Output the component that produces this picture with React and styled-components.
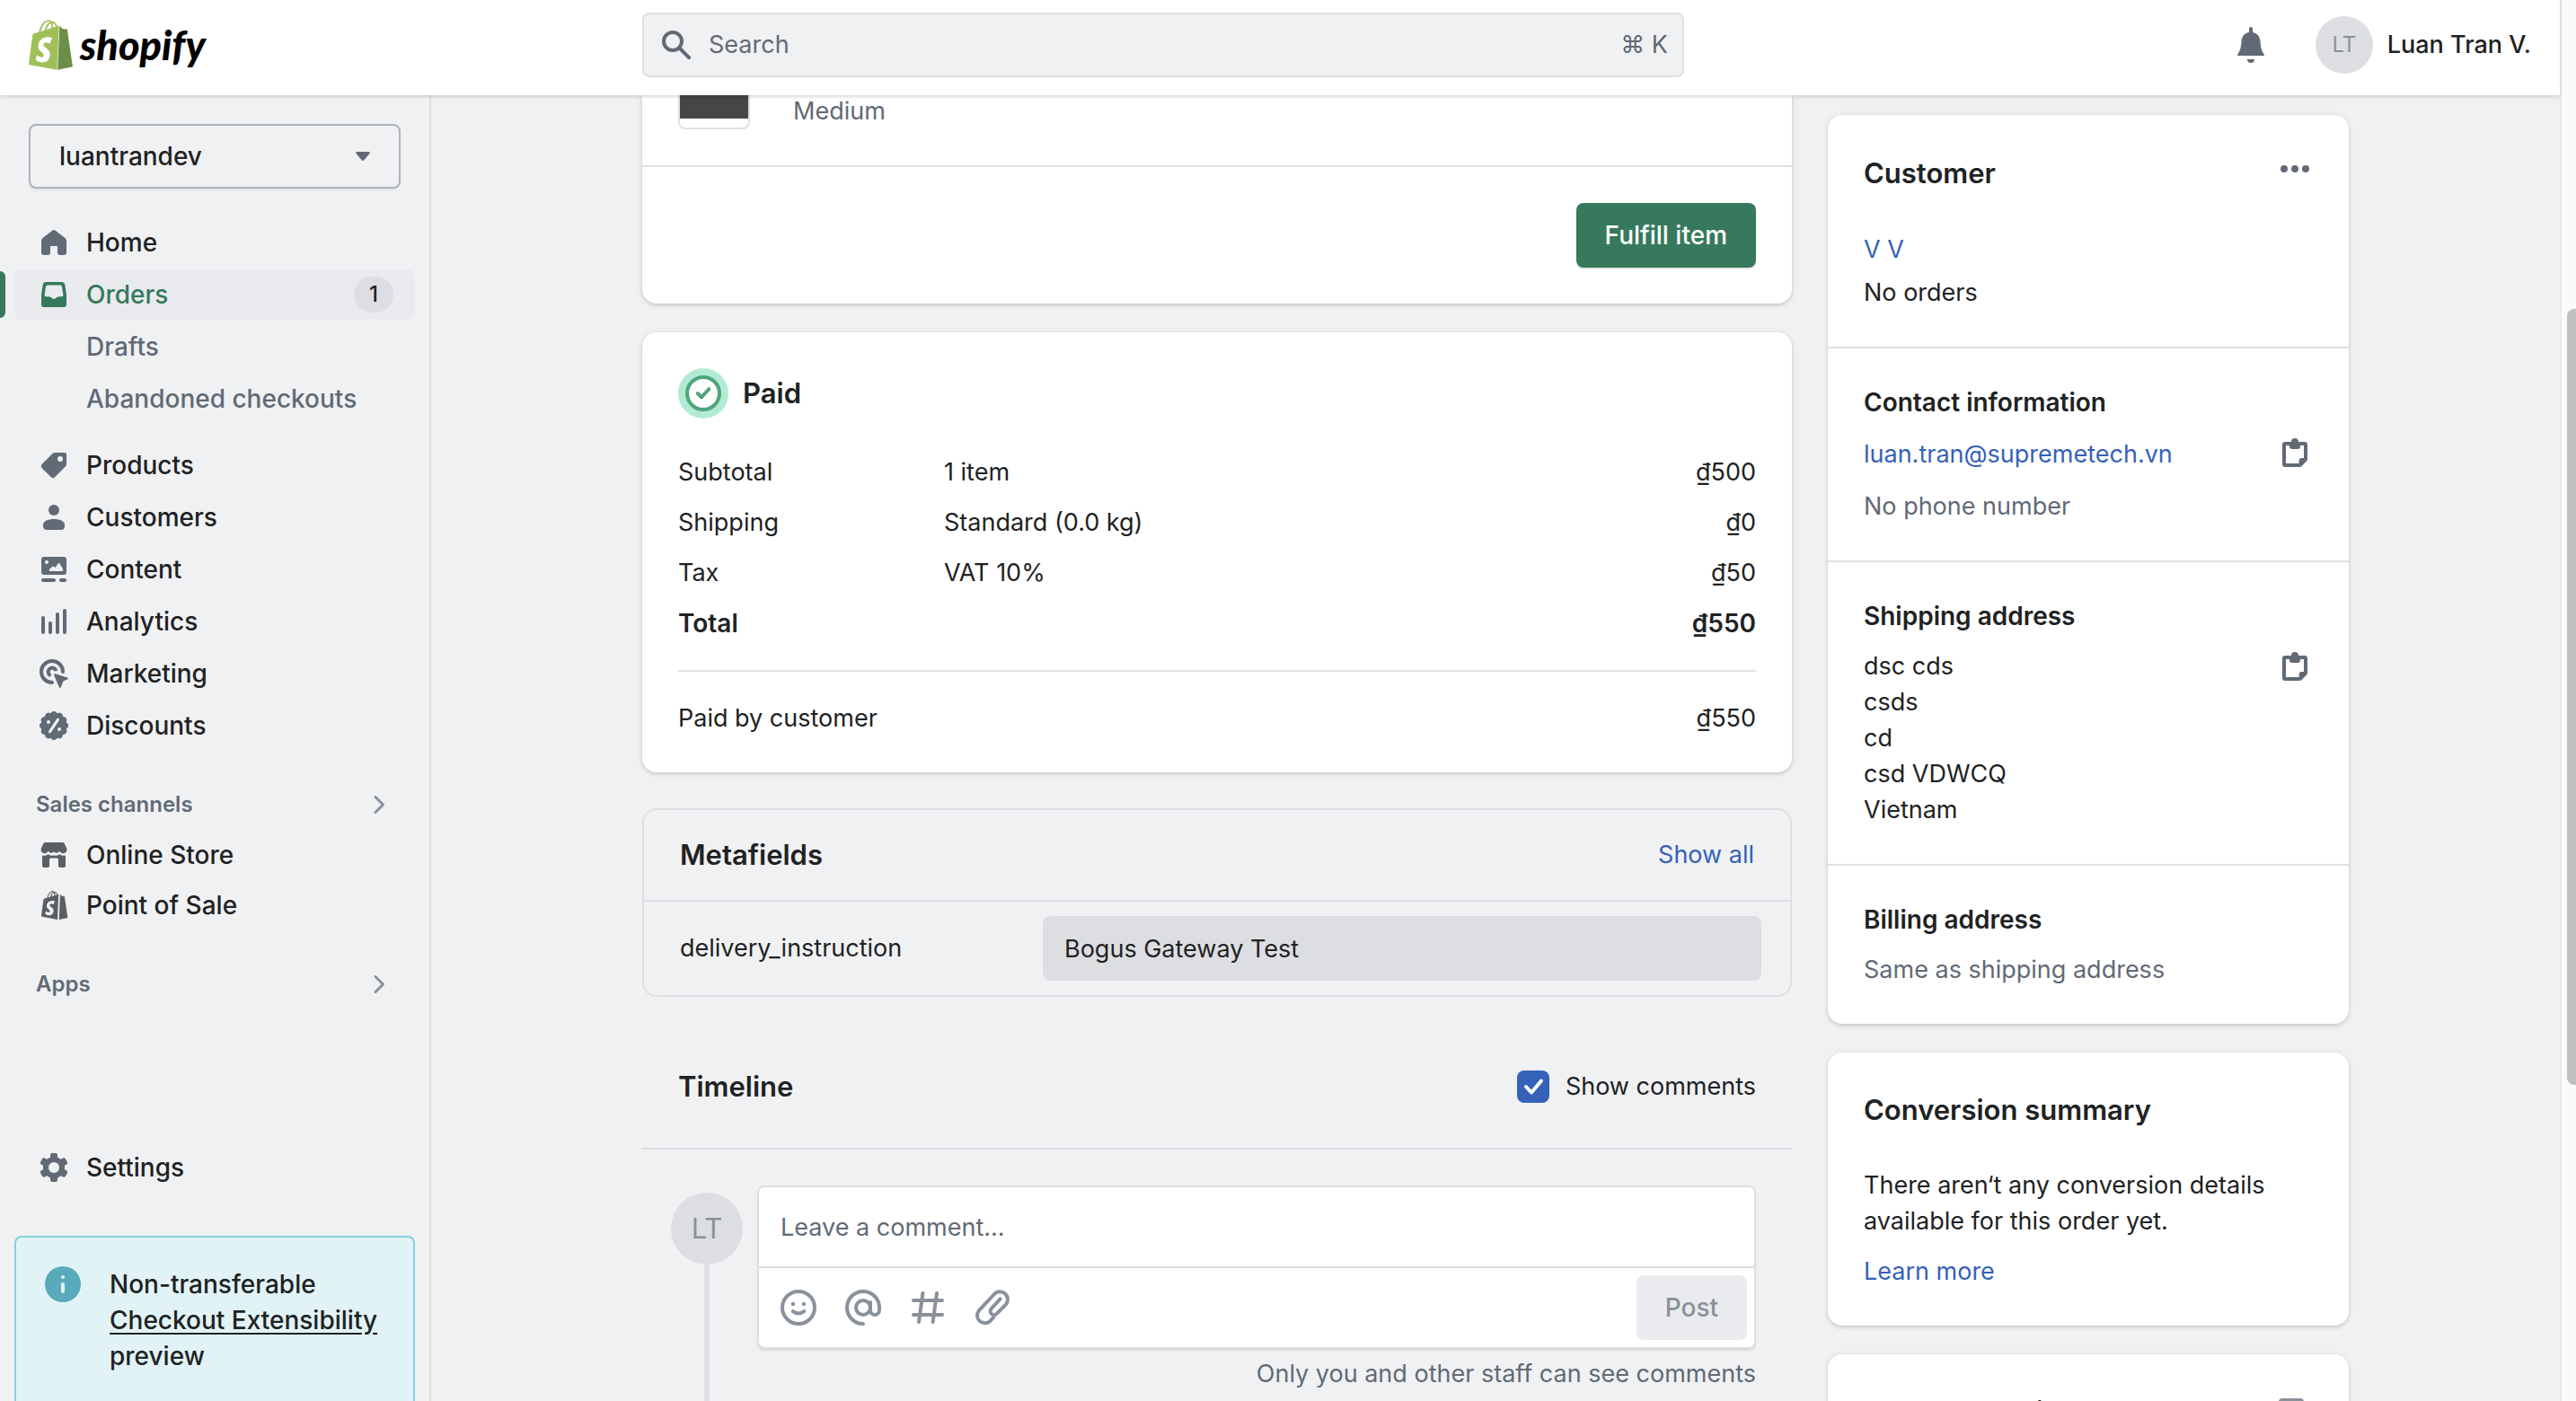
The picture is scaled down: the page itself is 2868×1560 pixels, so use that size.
import React from "react";
import styled, { createGlobalStyle, css } from "styled-components";

const c = {
  text: "#202223",
  subdued: "#616a75",
  icon: "#616a75",
  muted: "#8a919b",
  page: "#f0f1f3",
  border: "#dddfe2",
  divider: "#dfdfe5",
  fill: "#dddee2",
  hover: "#eaebee",
  green: "#36795d",
  link: "#3561b8",
};

const GlobalStyle = createGlobalStyle`
  *, *::before, *::after { box-sizing: border-box; }
  body {
    margin: 0;
    background: ${c.page};
    color: ${c.text};
    font: 400 27px/40px Inter, "Liberation Sans", sans-serif;
    -webkit-font-smoothing: antialiased;
  }
  button, input, select { font: inherit; color: inherit; }
  h2, h3, p, ul { margin: 0; padding: 0; }
  ul { list-style: none; }
`;

/* ---------- Frame ---------- */

const Frame = styled.div`
  display: grid;
  grid-template-columns: 480px minmax(0, 1fr) 18px;
  grid-template-rows: 106px minmax(0, 1fr);
  height: 100vh;
  overflow: hidden;
`;

const pageColumns = css`
  display: grid;
  grid-template-columns: minmax(32px, 1fr) minmax(0, 1900px) minmax(32px, 1fr);
`;

const strong = css`
  font-size: 28px;
  font-weight: 500;
`;

const TopBar = styled.header`
  grid-column: 1 / 3;
  display: grid;
  grid-template-columns: 480px minmax(0, 1fr);
  align-items: center;
  padding-bottom: 6px;
  background: #fff;
  box-shadow: 0 2px 4px rgba(0, 0, 0, 0.14);
  z-index: 1;
`;

const Brand = styled.a`
  display: flex;
  align-items: center;
  gap: 8px;
  height: 56px;
  padding-left: 32px;
  color: #000;
  font: italic 900 45px/56px Lato, "Open Sans", sans-serif;
  text-decoration: none;
`;

const TopBarBody = styled.div`
  ${pageColumns}
  align-items: center;
`;

const SearchBox = styled.label`
  grid-column: 2;
  grid-row: 1;
  display: flex;
  align-items: center;
  gap: 16px;
  width: 100%;
  max-width: 1160px;
  height: 72px;
  padding: 0 16px;
  border: 2px solid ${c.divider};
  border-radius: 8px;
  background: ${c.page};
  color: ${c.subdued};
`;

const BareInput = styled.input`
  flex: 1;
  min-width: 0;
  padding: 0;
  border: 0;
  outline: 0;
  background: none;
  &::placeholder { color: ${c.subdued}; opacity: 1; }
`;

const UserArea = styled.div`
  grid-column: 2 / 4;
  grid-row: 1;
  justify-self: end;
  display: flex;
  align-items: center;
  gap: 52px;
  padding-right: 32px;
`;

const IconButton = styled.button`
  display: inline-flex;
  flex: none;
  padding: 0;
  border: 0;
  background: none;
  color: ${(p) => (p.$muted ? c.muted : c.icon)};
`;

const UserButton = styled.button`
  display: flex;
  align-items: center;
  gap: 16px;
  padding: 0;
  border: 0;
  background: none;
  font-weight: 500;
`;

const Avatar = styled.span`
  display: flex;
  flex: none;
  align-items: center;
  justify-content: center;
  width: ${(p) => p.$size}px;
  height: ${(p) => p.$size}px;
  border-radius: 50%;
  background: ${c.fill};
  color: ${c.muted};
  font-size: ${(p) => (p.$size > 64 ? 31 : 24)}px;
  font-weight: 400;
`;

/* ---------- Sidebar ---------- */

const Sidebar = styled.nav`
  display: flex;
  flex-direction: column;
  min-height: 0;
  overflow: hidden;
  padding-top: 32px;
  border-right: 2px solid ${c.border};
`;

const StorePicker = styled.div`
  display: grid;
  align-items: center;
  margin: 0 32px 32px;
  > * { grid-area: 1 / 1; }
  > svg { justify-self: end; margin-right: 34px; pointer-events: none; }
`;

const StoreSelect = styled.select`
  ${strong}
  width: 100%;
  height: 72px;
  padding: 0 32px;
  border: 2px solid #aeb3bb;
  border-radius: 8px;
  background: none;
  box-shadow: 0 2px 2px rgba(0, 0, 0, 0.06);
  appearance: none;
`;

const NavList = styled.ul`
  display: grid;
  gap: ${(p) => (p.$tight ? 0 : 2)}px;
  padding: 0 16px;
  & + & { margin-top: 18px; }
`;

const NavItem = styled.li`
  display: flex;
  border-radius: 8px;
  background: ${(p) => (p.$active ? c.hover : "none")};
  ${(p) =>
    p.$active &&
    css`
      position: relative;
      &::before {
        content: "";
        position: absolute;
        left: -16px;
        top: 2px;
        bottom: 2px;
        width: 6px;
        border-radius: 0 8px 8px 0;
        background: ${c.green};
      }
    `}
`;

const NavLink = styled.a`
  ${strong}
  display: flex;
  flex: 1;
  align-items: center;
  gap: 16px;
  height: 56px;
  padding: 0 24px 0 ${(p) => (p.$sub ? 80 : 24)}px;
  color: ${(p) => (p.$active ? c.green : p.$sub ? c.subdued : c.text)};
  text-decoration: none;
  > svg { color: ${(p) => (p.$active ? c.green : p.$dark ? "#5c5f62" : c.icon)}; }
`;

const Count = styled.span`
  margin-left: auto;
  min-width: 44px;
  border-radius: 20px;
  background: ${c.fill};
  color: ${c.text};
  font-size: 24px;
  text-align: center;
`;

const NavHeading = styled.button`
  display: flex;
  align-items: center;
  justify-content: space-between;
  height: 56px;
  margin-top: 32px;
  padding: 0 46px 0 40px;
  border: 0;
  background: none;
  color: ${c.subdued};
  font-size: 24px;
  font-weight: 600;
  > svg { color: ${c.muted}; }
`;

const SidebarFooter = styled.div`
  display: grid;
  gap: 48px;
  margin-top: auto;
`;

const Notice = styled.aside`
  ${strong}
  display: flex;
  gap: 32px;
  margin: 0 16px;
  padding: 32px 20px 30px 32px;
  border: 2px solid #85cfda;
  border-bottom: 0;
  border-radius: 8px 8px 0 0;
  background: #e1f3f6;
  a { color: inherit; text-underline-offset: 4px; }
`;

/* ---------- Page ---------- */

const Page = styled.main`
  ${pageColumns}
  min-height: 0;
  overflow: hidden;
`;

const Columns = styled.div`
  grid-column: 2;
  display: grid;
  grid-template-columns: minmax(0, 1fr) 580px;
  gap: 40px;
  align-items: start;
`;

const Stack = styled.div`
  display: grid;
  gap: 32px;
  padding-top: ${(p) => p.$top || 0}px;
`;

const Card = styled.section`
  border-radius: ${(p) => (p.$continued ? "0 0 16px 16px" : "16px")};
  background: #fff;
  box-shadow: 0 0 10px rgba(23, 24, 24, 0.05), 0 2px 4px rgba(0, 0, 0, 0.15);
`;

const Section = styled.div`
  display: grid;
  gap: 16px;
  padding: 40px;
  & + & { border-top: 2px solid ${c.divider}; }
`;

const LineItem = styled.div`
  display: flex;
  align-items: flex-end;
  gap: 48px;
  height: 78px;
  padding: 0 40px 40px;
  color: ${c.subdued};
`;

const Thumbnail = styled.div`
  width: 80px;
  height: 80px;
  padding-bottom: 10px;
  border: 2px solid ${c.divider};
  border-radius: 8px;
  background: #474545 content-box;
`;

const ButtonRow = styled.div`
  display: flex;
  justify-content: flex-end;
  padding: 40px;
  border-top: 2px solid ${c.divider};
`;

const Button = styled.button`
  ${strong}
  height: 72px;
  padding: 0 32px;
  border: 0;
  border-radius: 8px;
  background: ${c.green};
  color: #fff;
  box-shadow: 0 2px 2px rgba(0, 0, 0, 0.1);
  &:disabled { background: ${c.hover}; color: ${c.muted}; box-shadow: none; }
`;

const PaymentCard = styled(Card)`
  padding: 40px 40px 32px;
`;

const Title = styled.h2`
  font-size: 31px;
  line-height: 48px;
  font-weight: 600;
`;

const Subtitle = styled.h3`
  font-size: 28px;
  line-height: 40px;
  font-weight: 600;
`;

const StatusTitle = styled.div`
  display: flex;
  align-items: center;
  gap: 16px;
  margin-bottom: 32px;
`;

const Totals = styled.table`
  width: 100%;
  border-collapse: collapse;
  table-layout: fixed;
  th, td { padding: 8px 0; font-weight: inherit; text-align: left; }
  th { width: 296px; }
  td:last-child { text-align: right; }
  tbody tr:last-child { font-size: 28px; font-weight: 600; }
  tbody tr:last-child > * { padding-bottom: 32px; }
  tfoot tr > * { padding-top: 32px; border-top: 2px solid ${c.divider}; }
`;

const Metafields = styled.section`
  margin-top: 8px;
  border: 2px solid ${c.border};
  border-radius: 16px;
`;

const MetafieldsHeader = styled.div`
  display: flex;
  align-items: center;
  justify-content: space-between;
  height: 100px;
  padding: 0 40px;
`;

const MetafieldRow = styled.div`
  display: grid;
  grid-template-columns: minmax(0, 1fr) minmax(0, 800px);
  align-items: center;
  padding: 16px 32px 16px 40px;
  border-top: 2px solid ${c.border};
`;

const MetafieldInput = styled.input`
  width: 100%;
  height: 72px;
  padding: 0 24px;
  border: 0;
  border-radius: 8px;
  background: ${c.fill};
`;

const Link = styled.a`
  justify-self: start;
  color: ${c.link};
  text-decoration: none;
`;

const TimelineHeader = styled.div`
  display: flex;
  align-items: center;
  justify-content: space-between;
  padding: 44px 40px;
  border-bottom: 2px solid ${c.border};
`;

const CheckLabel = styled.label`
  display: flex;
  align-items: center;
  gap: 18px;
`;

const CheckSlot = styled.span`
  display: grid;
  > * { grid-area: 1 / 1; }
  > svg { pointer-events: none; }
`;

const Checkbox = styled.input`
  width: 36px;
  height: 36px;
  margin: 0;
  border-radius: 8px;
  background: ${c.fill};
  appearance: none;
  &:checked { background: ${c.link}; }
`;

const Timeline = styled.div`
  display: grid;
  grid-template-columns: 80px minmax(0, 1fr);
  gap: 16px;
  margin-top: 8px;
  padding: 0 40px 0 32px;
`;

const Rail = styled.div`
  display: flex;
  flex-direction: column;
  align-items: center;
  padding-top: 8px;
  &::after { content: ""; flex: 1; width: 6px; min-height: 400px; background: ${c.border}; }
`;

const Composer = styled.div`
  display: grid;
  border: 2px solid ${c.border};
  border-radius: 8px;
  background: #fff;
  box-shadow: 0 2px 2px rgba(0, 0, 0, 0.1);
`;

const CommentInput = styled(BareInput)`
  height: 88px;
  padding: 0 24px;
`;

const ComposerTools = styled.div`
  display: flex;
  align-items: center;
  gap: 32px;
  padding: 8px 8px 8px 24px;
  border-top: 2px solid ${c.border};
  ${Button} { margin-left: auto; }
`;

const Hint = styled.p`
  margin-top: 8px;
  color: ${c.subdued};
  text-align: right;
`;

const SplitRow = styled.div`
  display: flex;
  align-items: flex-start;
  justify-content: space-between;
  min-height: ${(p) => p.$min || 0}px;
  > :first-child { align-self: center; }
`;

const CardHeader = styled(SplitRow)`
  margin-bottom: 24px;
`;

const Lines = styled.div`
  display: grid;
  gap: ${(p) => p.$gap || 0}px;
`;

const Subdued = styled.p`
  color: ${c.subdued};
`;

/* ---------- Scroll track ---------- */

const Track = styled.div`
  grid-column: 3;
  grid-row: 1 / 3;
  overflow: hidden;
  padding: 344px 0 0 6px;
  border-left: 2px solid #e8e8e8;
  background: #fafafa;
`;

const Thumb = styled.div`
  width: 100%;
  height: 864px;
  border-radius: 8px 0 0 8px;
  background: #c1c1c1;
`;

/* ---------- Icons ---------- */

const Glyph = styled.svg.attrs({
  width: 40,
  height: 40,
  fill: "currentColor",
  "aria-hidden": true,
})`
  flex: none;
`;

const Icon = ({ children, viewBox = "0 0 20 20" }) => <Glyph viewBox={viewBox}>{children}</Glyph>;

const Line = (props) => (
  <g fill="none" stroke="currentColor" strokeWidth="2" strokeLinecap="round" strokeLinejoin="round" {...props} />
);

const BAG_SIDE =
  "M15.337 23.979l7.216-1.561s-2.604-17.613-2.625-17.73c-.018-.116-.114-.192-.211-.192s-1.929-.136-1.929-.136-1.275-1.274-1.439-1.411c-.045-.037-.075-.057-.121-.074l-.914 21.104z";
const BAG_FRONT =
  "M11.71 11.305s-.81-.424-1.774-.424c-1.447 0-1.504.906-1.504 1.141 0 1.232 3.24 1.715 3.24 4.629 0 2.295-1.44 3.76-3.406 3.76-2.354 0-3.54-1.465-3.54-1.465l.646-2.086s1.245 1.066 2.28 1.066c.675 0 .975-.545.975-.932 0-1.619-2.654-1.694-2.654-4.359-.034-2.237 1.571-4.416 4.827-4.416 1.257 0 1.875.361 1.875.361l-.945 2.715zM11.17.83c.136 0 .271.038.405.135-.984.465-2.064 1.639-2.508 3.992-.656.213-1.293.405-1.889.578C7.697 3.75 8.951.84 11.17.84V.83zm1.235 2.949v.135c-.754.232-1.583.484-2.394.736.466-1.777 1.333-2.645 2.085-2.971.193.501.309 1.176.309 2.1zm.539-2.234c.694.074 1.141.867 1.429 1.755-.349.114-.735.231-1.158.366v-.252c0-.752-.096-1.371-.271-1.871zm2.992 1.289c-.02 0-.06.021-.078.021s-.289.075-.714.21c-.423-1.233-1.176-2.37-2.508-2.37h-.115C12.135.209 11.669 0 11.265 0 8.159 0 6.675 3.877 6.21 5.846c-1.194.365-2.063.636-2.16.674-.675.213-.694.232-.772.87-.075.462-1.83 14.063-1.83 14.063L15.009 24l.927-21.166z";

const BagLogo = () => (
  <svg width="49" height="56" viewBox="1.448 0 21.105 24" aria-hidden="true">
    <path d={BAG_FRONT} fill="#9fbf58" fillRule="evenodd" />
    <path d={BAG_SIDE} fill="#6b8e49" />
  </svg>
);

const HomeIcon = () => (
  <Icon>
    <path d="M9.300 3.300a1.100 1.100 0 0 1 1.400 0l5.500 4.200q.8.700.8 1.700v6.300a1.500 1.500 0 0 1-1.500 1.500h-2.300a1.200 1.200 0 0 1-1.200-1.200v-3.800H8v3.800A1.200 1.200 0 0 1 6.800 17H4.500A1.500 1.500 0 0 1 3 15.500V9.200q0-1 .8-1.700z" />
  </Icon>
);

const OrdersIcon = () => (
  <Icon>
    <path
      fillRule="evenodd"
      d="M5.800 3h8.400a2 2 0 0 1 2 1.700L17 10v5.500a1.500 1.500 0 0 1-1.500 1.500h-11A1.500 1.500 0 0 1 3 15.500V10l.8-5.300a2 2 0 0 1 2-1.700zM6.500 4.800a1 1 0 0 0-1 .8L4.800 10.200q-.1.900.7.900h1.600q.6 0 1 .3l1.200.8q.7.400 1.400 0l1.200-.8q.4-.3 1-.3h1.600q.8 0 .7-.9l-.7-4.600a1 1 0 0 0-1-.8z"
    />
  </Icon>
);

const ProductsIcon = () => (
  <Icon>
    <path
      fillRule="evenodd"
      d="M10.600 3H16a1 1 0 0 1 1 1v5.400a2 2 0 0 1-.6 1.400l-5.700 5.700a1.700 1.700 0 0 1-2.400 0L3.500 11.700a1.700 1.700 0 0 1 0-2.400l5.700-5.700a2 2 0 0 1 1.400-.6zM13.500 8a1.500 1.500 0 1 0 0-3 1.500 1.500 0 0 0 0 3z"
    />
  </Icon>
);

const CustomersIcon = () => (
  <Icon>
    <circle cx="10" cy="6" r="3" />
    <path d="M4 14.200C4 12 7 11 10 11s6 1 6 3.200V15a2 2 0 0 1-2 2H6a2 2 0 0 1-2-2z" />
  </Icon>
);

const ContentIcon = () => (
  <Icon>
    <path
      fillRule="evenodd"
      d="M4.500 3h11A1.500 1.500 0 0 1 17 4.500v7a1.500 1.500 0 0 1-1.500 1.500h-11A1.500 1.500 0 0 1 3 11.500v-7A1.500 1.500 0 0 1 4.500 3zM6 7a1 1 0 1 0 0-2 1 1 0 0 0 0 2zm2 4h6.500a.7.7 0 0 0 .6-1l-1.800-3.100q-.5-.8-1.100 0L11 8.700q-.3.400-.7 0l-.2-.2q-.5-.5-1 0L7.400 10q-.4.800.6 1z"
    />
    <path d="M4 15h6a1 1 0 0 1 0 2H4a1 1 0 0 1 0-2zM14 15h2a1 1 0 0 1 0 2h-2a1 1 0 0 1 0-2z" />
  </Icon>
);

const AnalyticsIcon = () => (
  <Icon>
    {[[3, 7], [7, 10], [11, 5], [15, 3]].map(([x, y]) => (
      <rect key={x} x={x} y={y} width="2" height={17 - y} rx="1" />
    ))}
  </Icon>
);

const MarketingIcon = () => (
  <Icon>
    <Line strokeLinecap="butt">
      <path d="M15 9a6 6 0 1 0-6 6" strokeLinecap="round" />
      <path d="M11.200 8.600A2.200 2.200 0 1 0 8.300 11.100" />
    </Line>
    <path d="M10.900 10.100 17.500 12.300q.9.500 0 1L15.200 14.300l-1.300 3.200q-.5.900-1 0L10.100 11q-.2-1 .8-.9z" />
  </Icon>
);

const DiscountsIcon = () => (
  <Icon>
    <circle cx="10" cy="10" r="7.200" />
    {[0, 30, 60, 90, 120, 150, 180, 210, 240, 270, 300, 330].map((a) => (
      <circle key={a} cx="10" cy="3.600" r="1.600" transform={`rotate(${a} 10 10)`} />
    ))}
    <g fill={c.page} stroke={c.page}>
      <path d="M12.200 6.700 7.800 13.300" strokeWidth="1.600" strokeLinecap="round" />
      <circle cx="7" cy="8" r="1" stroke="none" />
      <circle cx="13" cy="12" r="1" stroke="none" />
    </g>
  </Icon>
);

const StoreIcon = () => (
  <Icon>
    <path d="M5.300 3h9.400q.8 0 1.200.7l1.300 2.800v.5a2.100 2.100 0 0 1-4 .9 2.100 2.100 0 0 1-3.200.4 2.100 2.100 0 0 1-3.200-.4A2.100 2.100 0 0 1 2.800 7v-.5l1.300-2.800q.4-.7 1.200-.7z" />
    <path d="M3.500 10.300q1.800.4 3.300-.7 1.500 1 3.200.7 1.700.3 3.200-.7 1.500 1.100 3.300.7v5.700a1 1 0 0 1-1 1h-2a1 1 0 0 1-1-1v-3.500q0-.8-.8-.8H8.300q-.8 0-.8.800V16a1 1 0 0 1-1 1h-2a1 1 0 0 1-1-1z" />
  </Icon>
);

const PosIcon = () => (
  <Icon viewBox="-3 -3 30 30">
    <path d={BAG_FRONT} fillRule="evenodd" />
    <path d={BAG_SIDE} transform="translate(1 0)" />
  </Icon>
);

const SettingsIcon = () => (
  <Icon>
    <circle cx="10" cy="10" r="6" />
    {[0, 60, 120].map((a) => (
      <rect key={a} x="8" y="2" width="4" height="16" rx="1" transform={`rotate(${a} 10 10)`} />
    ))}
    <circle cx="10" cy="10" r="3" fill={c.page} />
  </Icon>
);

const ChevronIcon = () => (
  <svg width="20" height="24" viewBox="0 0 20 24" fill="none" stroke="currentColor" strokeWidth="3" strokeLinecap="round" strokeLinejoin="round" aria-hidden="true">
    <path d="M6 3.500 14.500 12 6 20.500" />
  </svg>
);

const CaretIcon = () => (
  <svg width="16" height="10" viewBox="0 0 16 10" fill={c.icon} aria-hidden="true">
    <path d="M1.500 0h13q2 .3 1 2L9.300 9.300q-1.300 1.300-2.600 0L.5 2q-1-1.700 1-2z" />
  </svg>
);

const InfoIcon = () => (
  <Icon>
    <circle cx="10" cy="10" r="10" fill="#59aabb" />
    <g fill="#e1f3f6">
      <circle cx="10" cy="6" r="1" />
      <rect x="9" y="9" width="2" height="6" rx="1" />
    </g>
  </Icon>
);

const SearchIcon = () => (
  <Icon>
    <Line>
      <circle cx="8" cy="8" r="5" />
      <path d="m12 12 5 5" />
    </Line>
  </Icon>
);

const BellIcon = () => (
  <Icon>
    <path d="M9 1a1 1 0 0 1 2 0v2c2.700.5 4 2.400 4.200 4.800.3 3.300.6 5.300 2 7.200.5.700.3 1-.4 1H3.200c-.7 0-.9-.3-.4-1 1.400-1.900 1.700-3.900 2-7.200C5 5.400 6.300 3.500 9 3z" />
    <path d="M8 18h4a2 2 0 0 1-4 0z" />
  </Icon>
);

const DotsIcon = () => (
  <Icon>
    <circle cx="4" cy="10" r="2" />
    <circle cx="10" cy="10" r="2" />
    <circle cx="16" cy="10" r="2" />
  </Icon>
);

const ClipboardIcon = () => (
  <Icon>
    <path
      fillRule="evenodd"
      d="M8 4a2 2 0 0 1 4 0h3.500A1.500 1.500 0 0 1 17 5.500V13.500q0 .8-.6 1.400l-2.500 2.500q-.6.600-1.400.6h-8A1.500 1.500 0 0 1 3 16.500v-11A1.500 1.500 0 0 1 4.500 4zM5 6v10h7.300v-1.500q0-1.500 1.500-1.500H15V6h-2v.8Q13 8 11.800 8H8.200Q7 8 7 6.800V6z"
    />
  </Icon>
);

const SuccessIcon = () => (
  <svg width="56" height="56" viewBox="0 0 28 28" fill="none" aria-hidden="true">
    <circle cx="14" cy="14" r="14" fill="#b2ebd3" />
    <circle cx="14" cy="14" r="9" fill="#fff" stroke="#50a57c" strokeWidth="2" />
    <path d="m10.900 14 2.100 2.200 4.200-4.600" stroke="#50a57c" strokeWidth="2" strokeLinecap="round" strokeLinejoin="round" />
  </svg>
);

const CheckMark = () => (
  <svg width="36" height="36" viewBox="0 0 36 36" fill="none" aria-hidden="true">
    <path d="m10 18 6 6.500 11-13" stroke="#fff" strokeWidth="4" strokeLinecap="round" strokeLinejoin="round" />
  </svg>
);

const SmileIcon = () => (
  <Icon>
    <Line>
      <circle cx="10" cy="10" r="9" />
      <path d="M6.900 12.100q3.100 2.300 6.200 0" />
    </Line>
    <circle cx="7" cy="8" r="1.100" />
    <circle cx="13" cy="8" r="1.100" />
  </Icon>
);

const MentionIcon = () => (
  <Icon>
    <Line>
      <circle cx="10" cy="10" r="4" />
      <path d="M14 7v4.500a2.500 2.500 0 0 0 5 0V10a9 9 0 1 0-9 9" />
    </Line>
  </Icon>
);

const HashIcon = () => (
  <Icon>
    <Line>
      <path d="M2 6h16M2 14h16M7.200 2 5 18M15 2l-2.200 16" />
    </Line>
  </Icon>
);

const AttachIcon = () => (
  <Icon>
    <Line>
      <path d="m10.700 15.300-2.100 2.300A4.300 4.300 0 0 1 2.400 11.700L11 2.500a4.300 4.300 0 0 1 6.300 5.900l-5 5a2 2 0 0 1-2.900-2.900l4.900-5.300" />
    </Line>
  </Icon>
);

const ReportIcon = () => (
  <Icon>
    <path fillRule="evenodd" d="M3 4.500h10A2 2 0 0 1 15 6.500v10a2 2 0 0 1-2 2H3a2 2 0 0 1-2-2v-10a2 2 0 0 1 2-2zM3 8v8h10V8z" />
  </Icon>
);

/* ---------- Content ---------- */

const mainNav = [
  { label: "Home", icon: HomeIcon },
  { label: "Orders", icon: OrdersIcon, active: true, count: 1 },
  { label: "Drafts", sub: true },
  { label: "Abandoned checkouts", sub: true },
];

const shopNav = [
  { label: "Products", icon: ProductsIcon },
  { label: "Customers", icon: CustomersIcon },
  { label: "Content", icon: ContentIcon },
  { label: "Analytics", icon: AnalyticsIcon },
  { label: "Marketing", icon: MarketingIcon },
  { label: "Discounts", icon: DiscountsIcon },
];

const channelNav = [
  { label: "Online Store", icon: StoreIcon, dark: true },
  { label: "Point of Sale", icon: PosIcon, dark: true },
];

const totals = [
  ["Subtotal", "1 item", "₫500"],
  ["Shipping", "Standard (0.0 kg)", "₫0"],
  ["Tax", "VAT 10%", "₫50"],
  ["Total", "", "₫550"],
];

const address = ["dsc cds", "csds", "cd", "csd VDWCQ", "Vietnam"];

const Nav = ({ items, tight }) => (
  <NavList $tight={tight}>
    {items.map(({ label, icon: ItemIcon, active, sub, dark, count }) => (
      <NavItem key={label} $active={active}>
        <NavLink href="#" $active={active} $sub={sub} $dark={dark}>
          {ItemIcon && <ItemIcon />}
          {label}
          {count && <Count>{count}</Count>}
        </NavLink>
      </NavItem>
    ))}
  </NavList>
);

export default function App() {
  return (
    <>
      <GlobalStyle />
      <Frame>
        <TopBar>
          <Brand href="#">
            <BagLogo />
            shopify
          </Brand>
          <TopBarBody>
            <SearchBox>
              <SearchIcon />
              <BareInput type="search" placeholder="Search" aria-label="Search" />
              <span>⌘ K</span>
            </SearchBox>
            <UserArea>
              <IconButton aria-label="Notifications"><BellIcon /></IconButton>
              <UserButton>
                <Avatar $size={64}>LT</Avatar>
                Luan Tran V.
              </UserButton>
            </UserArea>
          </TopBarBody>
        </TopBar>

        <Sidebar>
          <StorePicker>
            <StoreSelect aria-label="Store" defaultValue="luantrandev">
              <option>luantrandev</option>
            </StoreSelect>
            <CaretIcon />
          </StorePicker>
          <Nav items={mainNav} />
          <Nav items={shopNav} />
          <NavHeading>Sales channels<ChevronIcon /></NavHeading>
          <Nav items={channelNav} tight />
          <NavHeading>Apps<ChevronIcon /></NavHeading>
          <SidebarFooter>
            <Nav items={[{ label: "Settings", icon: SettingsIcon }]} />
            <Notice>
              <InfoIcon />
              <p>
                Non-transferable <a href="#">Checkout Extensibility</a> preview
              </p>
            </Notice>
          </SidebarFooter>
        </Sidebar>

        <Page>
          <Columns>
            <Stack>
              <Card $continued>
                <LineItem>
                  <Thumbnail />
                  Medium
                </LineItem>
                <ButtonRow><Button>Fulfill item</Button></ButtonRow>
              </Card>

              <PaymentCard>
                <StatusTitle>
                  <SuccessIcon />
                  <Title>Paid</Title>
                </StatusTitle>
                <Totals>
                  <tbody>
                    {totals.map(([name, detail, amount]) => (
                      <tr key={name}>
                        <th scope="row">{name}</th>
                        <td>{detail}</td>
                        <td>{amount}</td>
                      </tr>
                    ))}
                  </tbody>
                  <tfoot>
                    <tr>
                      <th scope="row">Paid by customer</th>
                      <td />
                      <td>₫550</td>
                    </tr>
                  </tfoot>
                </Totals>
              </PaymentCard>

              <Metafields>
                <MetafieldsHeader>
                  <Title>Metafields</Title>
                  <Link href="#">Show all</Link>
                </MetafieldsHeader>
                <MetafieldRow>
                  <label htmlFor="delivery">delivery_instruction</label>
                  <MetafieldInput id="delivery" readOnly value="Bogus Gateway Test" />
                </MetafieldRow>
              </Metafields>

              <TimelineHeader>
                <Title>Timeline</Title>
                <CheckLabel>
                  <CheckSlot>
                    <Checkbox type="checkbox" defaultChecked />
                    <CheckMark />
                  </CheckSlot>
                  Show comments
                </CheckLabel>
              </TimelineHeader>

              <Timeline>
                <Rail><Avatar $size={80}>LT</Avatar></Rail>
                <div>
                  <Composer>
                    <CommentInput placeholder="Leave a comment..." aria-label="Leave a comment" />
                    <ComposerTools>
                      <IconButton $muted aria-label="Emoji"><SmileIcon /></IconButton>
                      <IconButton $muted aria-label="Mention"><MentionIcon /></IconButton>
                      <IconButton $muted aria-label="Reference"><HashIcon /></IconButton>
                      <IconButton $muted aria-label="Attach file"><AttachIcon /></IconButton>
                      <Button disabled>Post</Button>
                    </ComposerTools>
                  </Composer>
                  <Hint>Only you and other staff can see comments</Hint>
                </div>
              </Timeline>
            </Stack>

            <Stack $top={22}>
              <Card>
                <Section>
                  <CardHeader $min={50}>
                    <Title>Customer</Title>
                    <IconButton aria-label="More actions"><DotsIcon /></IconButton>
                  </CardHeader>
                  <Lines $gap={8}>
                    <Link href="#">V V</Link>
                    <p>No orders</p>
                  </Lines>
                </Section>
                <Section>
                  <Subtitle>Contact information</Subtitle>
                  <SplitRow $min={44}>
                    <Link href="#">luan.tran@supremetech.vn</Link>
                    <IconButton aria-label="Copy email"><ClipboardIcon /></IconButton>
                  </SplitRow>
                  <Subdued>No phone number</Subdued>
                </Section>
                <Section>
                  <Subtitle>Shipping address</Subtitle>
                  <SplitRow>
                    <Lines>
                      {address.map((line) => <span key={line}>{line}</span>)}
                    </Lines>
                    <IconButton aria-label="Copy address"><ClipboardIcon /></IconButton>
                  </SplitRow>
                </Section>
                <Section>
                  <Subtitle>Billing address</Subtitle>
                  <Subdued>Same as shipping address</Subdued>
                </Section>
              </Card>

              <Card>
                <Section>
                  <CardHeader><Title>Conversion summary</Title></CardHeader>
                  <p>There aren‘t any conversion details available for this order yet.</p>
                  <Link href="#">Learn more</Link>
                </Section>
              </Card>

              <Card>
                <Section>
                  <CardHeader>
                    <Title>Fraud analysis</Title>
                    <IconButton $muted aria-label="View report"><ReportIcon /></IconButton>
                  </CardHeader>
                </Section>
              </Card>
            </Stack>
          </Columns>
        </Page>

        <Track><Thumb /></Track>
      </Frame>
    </>
  );
}
